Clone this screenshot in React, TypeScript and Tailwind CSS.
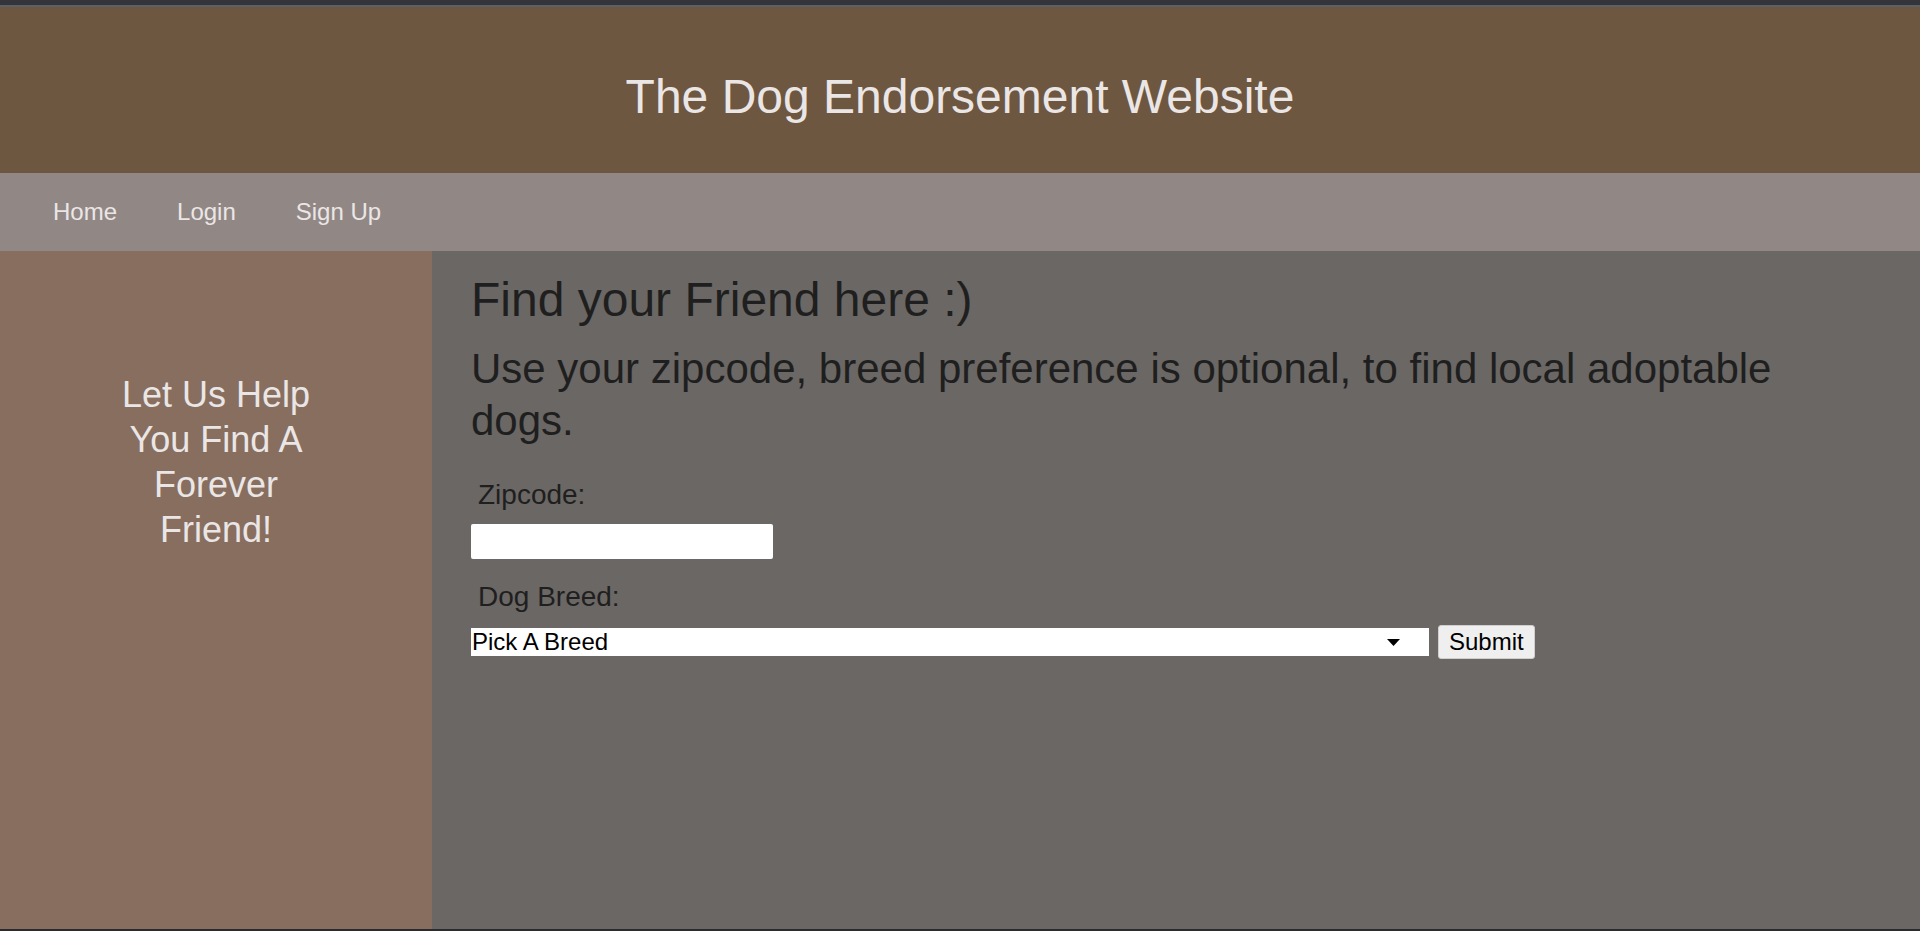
const navLinks = ["Home", "Login", "Sign Up"];

const App = () => {
  return (
    <div className="flex flex-col h-[931px] overflow-hidden bg-[#2b2b2d] font-['Liberation_Sans',Arial,sans-serif]">
      {/* window edge */}
      <div className="h-[5px] bg-[#33353b]" />
      <div className="h-[2px] bg-[#5b5f66]" />

      {/* Header */}
      <header className="h-[166px] bg-[#6e5740] pt-[62px]">
        <h1 className="text-center text-[48px] leading-[55px] text-[#ebe6e6]">
          The Dog Endorsement Website
        </h1>
      </header>

      {/* Navigation */}
      <nav className="h-[78px] bg-[#918885] flex items-center pl-[23px]">
        {navLinks.map((link) => (
          <a key={link} href="#" className="px-[30px] text-[24px] text-[#ebe6e6]">
            {link}
          </a>
        ))}
      </nav>

      <div className="flex h-[678px]">
        {/* Sidebar */}
        <aside className="w-[432px] shrink-0 bg-[#876e5f] pt-[121px]">
          <p className="w-[200px] mx-auto text-center text-[36px] leading-[45px] text-[#ebe6e6]">
            Let Us Help You Find A Forever Friend!
          </p>
        </aside>

        {/* Main */}
        <main className="flex-1 bg-[#6b6764] pl-[39px] pr-[60px] pt-[21px] text-[#201f1f]">
          <h2 className="text-[48px] leading-[55px]">Find your Friend here :)</h2>
          <p className="mt-[16px] text-[42px] leading-[52px]">
            Use your zipcode, breed preference is optional, to find local adoptable dogs.
          </p>

          <form className="flex flex-col" onSubmit={(e) => e.preventDefault()}>
            <label className="mt-[32px] ml-[7px] text-[28px] leading-[32px]">Zipcode:</label>
            <input
              type="text"
              className="mt-[13px] w-[302px] h-[35px] bg-white rounded-[2px] outline-none px-1"
            />

            <label className="mt-[22px] ml-[7px] text-[28px] leading-[32px]">Dog Breed:</label>
            <div className="mt-[12px] flex items-center gap-[9px]">
              <div className="relative">
                <select className="appearance-none w-[958px] h-[28px] bg-white text-black text-[24px] leading-[28px] pl-[1px] outline-none">
                  <option>Pick A Breed</option>
                  <option>Labrador Retriever</option>
                  <option>German Shepherd</option>
                  <option>Golden Retriever</option>
                </select>
                <svg
                  className="absolute right-[29px] top-[11px] pointer-events-none"
                  width="13"
                  height="7"
                  viewBox="0 0 13 7"
                >
                  <path d="M0 0 H13 L6.5 7 Z" fill="#000" />
                </svg>
              </div>
              <button
                type="submit"
                className="h-[34px] px-[10px] bg-[#efefef] border border-[#d0cece] rounded-[3px] text-[24px] leading-[28px] text-black"
              >
                Submit
              </button>
            </div>
          </form>
        </main>
      </div>

      <div className="h-[2px] bg-[#2b2b2d]" />
    </div>
  );
};

export default App;
